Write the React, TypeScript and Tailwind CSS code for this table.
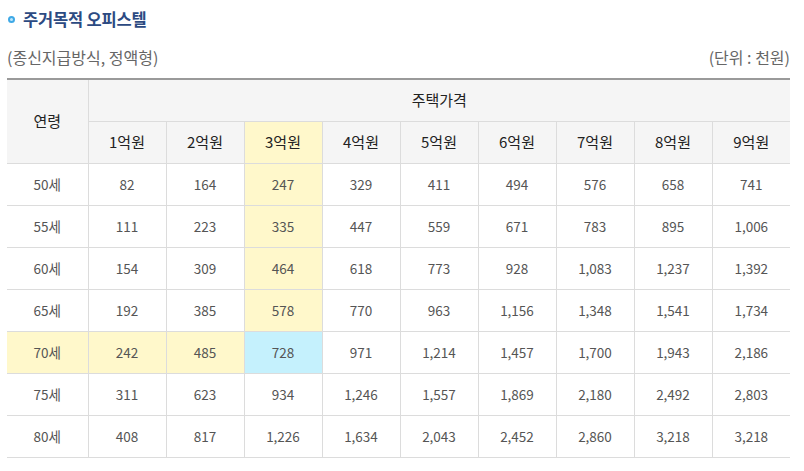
const prices = ['1억원', '2억원', '3억원', '4억원', '5억원', '6억원', '7억원', '8억원', '9억원']

const rows: { age: string; values: string[] }[] = [
  { age: '50세', values: ['82', '164', '247', '329', '411', '494', '576', '658', '741'] },
  { age: '55세', values: ['111', '223', '335', '447', '559', '671', '783', '895', '1,006'] },
  { age: '60세', values: ['154', '309', '464', '618', '773', '928', '1,083', '1,237', '1,392'] },
  { age: '65세', values: ['192', '385', '578', '770', '963', '1,156', '1,348', '1,541', '1,734'] },
  { age: '70세', values: ['242', '485', '728', '971', '1,214', '1,457', '1,700', '1,943', '2,186'] },
  { age: '75세', values: ['311', '623', '934', '1,246', '1,557', '1,869', '2,180', '2,492', '2,803'] },
  { age: '80세', values: ['408', '817', '1,226', '1,634', '2,043', '2,452', '2,860', '3,218', '3,218'] },
]

// crosshair highlight: column runs down to the row, row runs across to the column
const HIGHLIGHT_ROW = 4
const HIGHLIGHT_COL = 2

function cellBg(r: number, c: number) {
  if (r === HIGHLIGHT_ROW && c === HIGHLIGHT_COL) return 'bg-[#c5f1fd]'
  if (r === HIGHLIGHT_ROW && c < HIGHLIGHT_COL) return 'bg-[#fff8cb]'
  if (c === HIGHLIGHT_COL && r < HIGHLIGHT_ROW) return 'bg-[#fff8cb]'
  return 'bg-white'
}

export default function App() {
  return (
    <div className="w-[804px] h-[471px] bg-white pl-[7px] pr-[14px] font-['Noto_Sans_CJK_KR','Noto_Sans',sans-serif]">
      <div className="flex items-center gap-[8px] pt-[8px] h-[30px]">
        <span className="ml-[1px] w-[7px] h-[7px] rounded-full border-[2px] border-[#3fa9e6] bg-[#bfe6fb]" />
        <h2 className="text-[16.5px] font-bold text-[#2c4a82] leading-none tracking-[-0.2px]">주거목적 오피스텔</h2>
      </div>
      <div className="flex justify-between items-center h-[48px] pt-[6px] text-[16px] text-[#666] leading-none">
        <span>(종신지급방식, 정액형)</span>
        <span>(단위 : 천원)</span>
      </div>
      <table className="w-[783px] border-collapse table-fixed border-t-[2px] border-t-[#9a9a9a] text-center">
        <colgroup>
          <col className="w-[81px]" />
          {prices.map((p) => (
            <col key={p} className="w-[78px]" />
          ))}
        </colgroup>
        <thead>
          <tr className="h-[42px]">
            <th
              rowSpan={2}
              className="bg-[#f5f5f5] border-b border-b-[#dcdcdc] border-r border-r-[#dcdcdc] text-[15px] font-normal text-[#222]"
            >
              연령
            </th>
            <th colSpan={9} className="bg-[#f5f5f5] border-b border-b-[#dcdcdc] text-[15px] font-normal text-[#222]">
              주택가격
            </th>
          </tr>
          <tr className="h-[42px]">
            {prices.map((p, i) => (
              <th
                key={p}
                className={`${i === HIGHLIGHT_COL ? 'bg-[#fff8cb]' : 'bg-[#f5f5f5]'} ${i < 8 ? 'border-r border-r-[#dcdcdc]' : ''} border-b border-b-[#dcdcdc] text-[15px] font-normal text-[#222]`}
              >
                {p}
              </th>
            ))}
          </tr>
        </thead>
        <tbody>
          {rows.map((row, r) => (
            <tr key={row.age} className="h-[42px]">
              <td
                className={`${r === HIGHLIGHT_ROW ? 'bg-[#fff8cb]' : 'bg-white'} border-r border-r-[#dcdcdc] border-b border-b-[#dcdcdc] text-[13.5px] text-[#555]`}
              >
                {row.age}
              </td>
              {row.values.map((v, c) => (
                <td
                  key={c}
                  className={`${cellBg(r, c)} ${c < 8 ? 'border-r border-r-[#dcdcdc]' : ''} border-b border-b-[#dcdcdc] text-[13.5px] text-[#555]`}
                >
                  {v}
                </td>
              ))}
            </tr>
          ))}
        </tbody>
      </table>
    </div>
  )
}
